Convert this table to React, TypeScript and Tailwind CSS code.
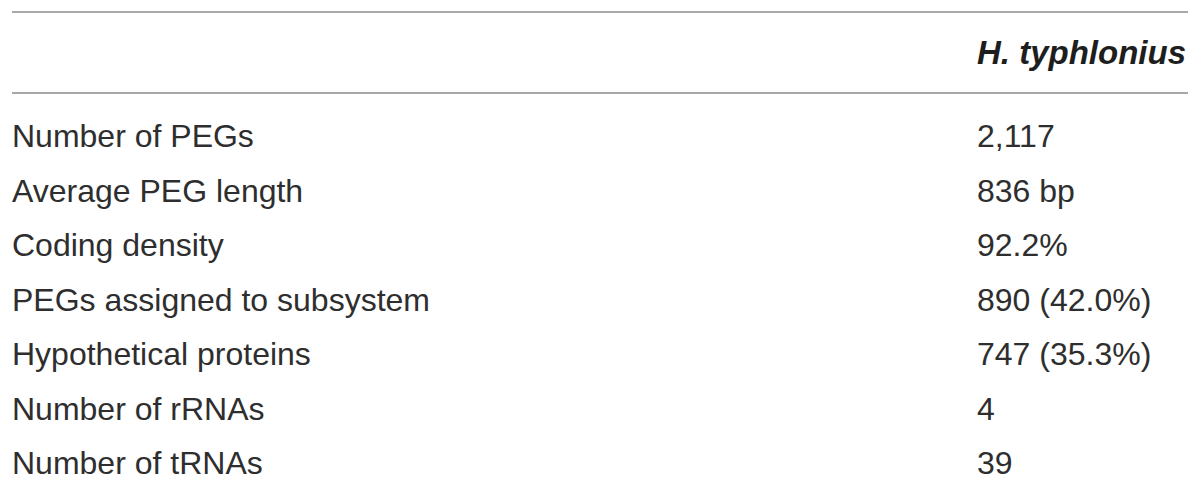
import React from "react";

// Genome annotation summary rows
const rows: [string, string][] = [
  ["Number of PEGs", "2,117"],
  ["Average PEG length", "836 bp"],
  ["Coding density", "92.2%"],
  ["PEGs assigned to subsystem", "890 (42.0%)"],
  ["Hypothetical proteins", "747 (35.3%)"],
  ["Number of rRNAs", "4"],
  ["Number of tRNAs", "39"],
];

export default function App() {
  return (
    <div
      className="w-[1200px] h-[485px] overflow-hidden bg-white px-[12px] pt-[11px] text-[#2e2e2e]"
      style={{ fontFamily: '"Liberation Sans", Arial, sans-serif' }}
    >
      {/* Header row */}
      <div className="flex h-[83px] items-center border-y-2 border-[#a8a8a8]">
        <div className="w-[965px]" />
        <div className="text-[33px] font-bold italic text-[#1e1e1e]">H. typhlonius</div>
      </div>
      {/* Body rows */}
      <div className="pt-[15px]">
        {rows.map(([label, value]) => (
          <div key={label} className="flex h-[54.5px] items-center text-[32px]">
            <div className="w-[965px]">{label}</div>
            <div>{value}</div>
          </div>
        ))}
      </div>
    </div>
  );
}
